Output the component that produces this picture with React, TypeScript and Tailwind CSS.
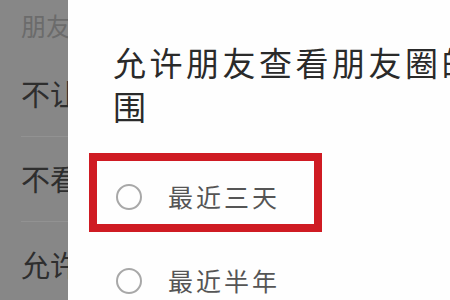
import React from 'react';

const font = { fontFamily: '"Noto Sans CJK SC", "Noto Sans", sans-serif' };

const settingRows = ['不让他看', '不看他', '允许朋友查看朋友圈的范围'];
const options = ['最近三天', '最近半年'];

const App: React.FC = () => {
  return (
    <div className="relative w-[450px] h-[300px] overflow-hidden bg-[#878787]" style={font}>
      {/* dimmed settings page behind the dialog */}
      <div className="flex flex-col pl-[21px]">
        <div className="h-[52px] flex items-center text-[25px] text-[#6b6b6b] whitespace-nowrap">
          朋友圈权限
        </div>
        {settingRows.map((row, i) => (
          <div
            key={row}
            className={`h-[85px] flex items-center text-[29px] text-[#2e2e2e] whitespace-nowrap ${
              i < settingRows.length - 1 ? 'border-b border-[#929292]' : ''
            }`}
          >
            {row}
          </div>
        ))}
      </div>

      {/* dialog */}
      <div className="absolute left-[68px] top-0 w-[480px] h-[300px] bg-[#fefefe]">
        <div className="pl-[45px] pt-[40px]">
          <h2 className="w-[410px] text-[33px] leading-[44px] tracking-[3.5px] text-[#2a2a2a] font-normal">
            允许朋友查看朋友圈的范围
          </h2>
        </div>
        <div className="mt-[27px] pl-[48px] flex flex-col">
          {options.map((opt) => (
            <div key={opt} className="h-[84px] flex items-center gap-[26px]">
              <span className="w-[26px] h-[26px] rounded-full border-2 border-[#a8a8a8] shrink-0" />
              <span className="text-[25px] tracking-[3px] text-[#555555] whitespace-nowrap">{opt}</span>
            </div>
          ))}
        </div>

        {/* annotation box */}
        <div className="absolute left-[21px] top-[153px] w-[233px] h-[79px] border-[8px] border-[#cf1b23]" />
      </div>
    </div>
  );
};

export default App;
